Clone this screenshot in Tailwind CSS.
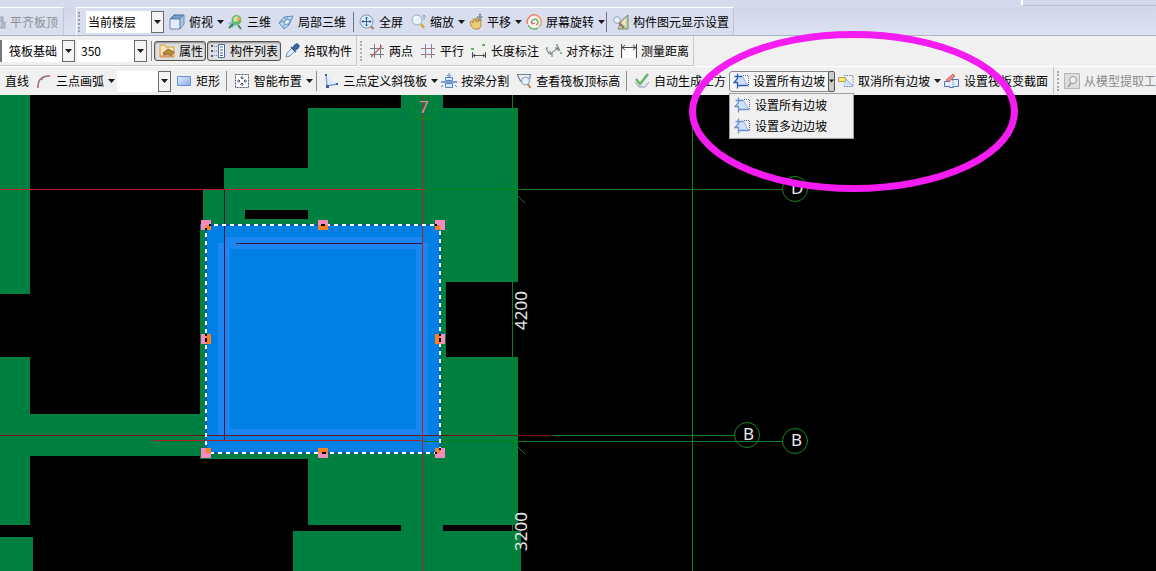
<!DOCTYPE html>
<html lang="zh-CN">
<head>
<meta charset="utf-8">
<title>筏板基础</title>
<script src="https://cdn.jsdelivr.net/npm/@tailwindcss/browser@4"></script>
</head>
<body class="relative flex h-screen flex-col overflow-hidden bg-black font-['Noto_Sans_CJK_SC',sans-serif] text-xs leading-4 text-black">

<svg class="hidden" aria-hidden="true">
  <symbol id="down" viewBox="0 0 7 4"><path d="M0 0h7L3.5 4z" fill="#1c1c1c"/></symbol>
  <symbol id="slope" viewBox="0 0 16 16">
    <path d="M4.500 3.500h5l5 9h-10v-2L1 9.500l3.500-3z" fill="#cfe0fa"/>
    <path d="M4.500 .5v5L1 9.500h3.500v6M1.500 3.500h8M4.500 12.500h11" fill="none" stroke="currentColor" stroke-width="1.300"/>
    <path d="M9.500 3.500l5 9" fill="none" stroke="#8fb0e6"/>
    <path d="M10 2.500h5.500v10" fill="none" stroke="#5a6478" stroke-dasharray="1 1"/>
  </symbol>
  <symbol id="globe" viewBox="0 0 16 16">
    <path d="M1 9l5-2 3 4-4 3z" fill="#8fb8e8"/>
    <circle cx="9.500" cy="6" r="5" fill="#63b56a"/><path d="M6 4l4-2 3 2-2 3-4 1z" fill="#c9e8a0"/><circle cx="12" cy="5" r="2" fill="#e8a060"/>
    <path d="M6 10l-4 4M11 11l3 4" stroke="#3f8b46" stroke-width="2"/>
  </symbol>
</svg>

<header class="shrink-0 bg-[#f0f0f0]">
  <!-- view toolbar -->
  <div class="flex h-[7px] justify-end bg-[#d5dbed]"><div class="h-1.5 w-[135px] border-b border-l-2 border-b-[#b9c0d3] border-l-white"></div></div>
  <div class="flex h-[29px] border-b border-[#a9b4c8] bg-linear-to-b from-[#d0d7ea] to-[#dde2f2] whitespace-nowrap">
    <div class="flex w-[64px] shrink-0 items-center border-t border-r border-t-white border-r-[#c3c8d8] bg-[#dadfee] text-[#8d8f97]">
      <button class="flex items-center gap-1" disabled>
        <svg class="h-4 w-1.5" viewBox="10 0 6 16"><path d="M10 3h3v4h-3M11 8h4v6h-5" fill="#b6bac6" stroke="#9ca1b0"/></svg>平齐板顶</button>
    </div>
    <div class="ml-3 flex items-center border-t border-r border-l border-t-white border-r-[#bcc3d6] border-l-white bg-[#d9deef]">
      <span class="mr-1.5 ml-px h-5 border-l-2 border-dotted border-[#9aa1b5]"></span>
      <div class="mr-px flex h-[22px] w-[78px] bg-white">
        <select aria-label="楼层" class="min-w-0 flex-1 appearance-none pl-0.5 outline-none"><option>当前楼层</option></select>
        <button aria-label="展开楼层" class="flex w-[13px] items-center justify-center border border-[#6b6b6b] bg-[#f4f4f4]"><svg class="h-1 w-[7px]"><use href="#down"/></svg></button>
      </div>
      <button class="flex items-center gap-1 pl-1">
        <svg class="size-4" viewBox="0 0 16 16"><path d="M1 5l4-4h10l-4 4z" fill="#6fa0cf" stroke="#47678c"/><path d="M1 5h10v10H1z" fill="#e2eefb" stroke="#6d8cb0"/><path d="M11 5l4-4v9l-4 5z" fill="#a9c8e8" stroke="#6d8cb0"/></svg>俯视
        <svg class="h-1 w-[7px]"><use href="#down"/></svg></button>
      <button class="flex items-center gap-1 pr-[3px] pl-[3px]"><svg class="size-4"><use href="#globe"/></svg>三维</button>
      <button class="flex items-center gap-1 pr-[3px] pl-1">
        <svg class="size-4" viewBox="0 0 16 16"><path d="M1 9l5-6 9-1-4 9-5 4z" fill="#bcd9f5" stroke="#5f8fc0"/><path d="M3 6l8 5M6 3l5 8M10 2L5 14M1 9l12-4" fill="none" stroke="#5f8fc0" stroke-width=".8"/><path d="M6 8l4-3 2 3-4 3z" fill="#eef6fd" stroke="#5f8fc0" stroke-width=".8"/></svg>局部三维</button>
      <span class="mr-px ml-1 h-5 w-px bg-[#6f7686]"></span>
      <button class="flex items-center gap-1 pr-[3px] pl-1">
        <svg class="size-4" viewBox="0 0 16 16"><path d="M11.500 12l3 3" stroke="#a87a3c" stroke-width="2"/><circle cx="7.500" cy="7.500" r="6.500" fill="#e1effc" stroke="#8198b5"/><path d="M7.500 3v9M3 7.500h9M6 4.500L7.500 3 9 4.500M6 10.500L7.500 12 9 10.500M4.500 6L3 7.500 4.500 9M10.500 6L12 7.500 10.500 9" fill="none" stroke="#2f5ea5"/></svg>全屏</button>
      <button class="flex items-center gap-1 pl-1">
        <svg class="size-4" viewBox="0 0 16 16"><path d="M11 10l3 4" stroke="#d8a640" stroke-width="2.500"/><circle cx="7" cy="6" r="5" fill="#e6f1fc" stroke="#98acc6"/><path d="M4 5a3 3 0 0 1 4-2" fill="none" stroke="#fff" stroke-width="1.500"/><path d="M14 1v5M12.500 2.500L14 1l1.500 1.500" fill="none" stroke="#8398b4"/></svg>缩放
        <svg class="h-1 w-[7px]"><use href="#down"/></svg></button>
      <button class="flex items-center gap-1 pl-1">
        <svg class="h-4 w-3.5" viewBox="0 0 14 16"><path d="M1 8l2-1 1 2 0-4h2l1 3V4h2v4l1-3h2v7l-2 3H5l-3-3z" fill="#edcb75" stroke="#a67e35" stroke-width=".8"/><path d="M11 0v7M8 3h6M10 1l1-1 1 1" stroke="#687587" fill="none"/></svg>平移
        <svg class="h-1 w-[7px]"><use href="#down"/></svg></button>
      <button class="flex items-center gap-1 pl-1">
        <svg class="size-4" viewBox="0 0 16 16"><circle cx="8" cy="8" r="7" fill="#fbeef0"/><path d="M1.500 10A7 7 0 0 1 11 1.500" fill="none" stroke="#e88078" stroke-width="1.500"/><path d="M11 1.500A7 7 0 0 1 13 13" fill="none" stroke="#e5a35d" stroke-width="1.500"/><path d="M12 14A7 7 0 0 1 2 11M6 9a3 3 0 1 1 4 2" fill="none" stroke="#65b868" stroke-width="1.500"/><path d="M5 7l1 3 3-1" fill="none" stroke="#d05a58"/></svg>屏幕旋转
        <svg class="h-1 w-[7px]"><use href="#down"/></svg></button>
      <span class="mr-0.5 ml-px h-5 w-px bg-[#6f7686]"></span>
      <button class="flex items-center gap-1 pr-1 pl-1">
        <svg class="size-4" viewBox="0 0 16 16"><path d="M9 6l6-5v14H5z" fill="#bdd3a5" stroke="#7b846d"/><path d="M8 9l5-5v8z" fill="#f3e3b8"/><circle cx="4" cy="6" r="3.300" fill="#eaf3fc" stroke="#92a2b8"/><path d="M6 9l5 5" stroke="#8c7b64" stroke-width="2"/></svg>构件图元显示设置</button>
    </div>
  </div>

  <!-- component toolbar -->
  <div class="flex h-[30px] items-stretch whitespace-nowrap">
    <div class="flex items-center border-r border-b border-[#c9c9c9]">
      <div class="flex h-[22px] w-[75px] border-l-2 border-[#777] bg-white">
        <select aria-label="构件类型" class="min-w-0 flex-1 appearance-none pl-[7px] outline-none"><option>筏板基础</option></select>
        <button aria-label="展开构件类型" class="flex w-[13px] items-center justify-center border border-[#6b6b6b] bg-[#f4f4f4]"><svg class="h-1 w-[7px]"><use href="#down"/></svg></button>
      </div>
      <div class="ml-0.5 flex h-[22px] w-[70px] bg-white">
        <input aria-label="构件" value="350" class="min-w-0 flex-1 pl-1 outline-none">
        <button aria-label="展开构件" class="flex w-[13px] items-center justify-center border border-[#6b6b6b] bg-[#f4f4f4]"><svg class="h-1 w-[7px]"><use href="#down"/></svg></button>
      </div>
      <span class="mr-0.5 ml-1 h-5 w-px bg-[#8c8c8c]"></span>
      <button aria-pressed="true" class="flex h-5 items-center gap-1 rounded-[3px] border border-[#555] bg-[#e0e0e0] pr-0.5 pl-1 shadow-[inset_0_1px_2px_#888]">
        <svg class="size-4" viewBox="0 0 16 16"><path d="M1 2h5l1 2h8v10H1z" fill="#fbe5b0" stroke="#d29a45"/><path d="M4 10l5-4 6 3-3 4-3-2-4 1z" fill="#b88a32" stroke="#6f5520" stroke-width=".7"/><path d="M1 13h13" stroke="#d56a50"/></svg>属性</button>
      <button aria-pressed="true" class="ml-px flex h-5 items-center gap-1 rounded-[3px] border border-[#555] bg-[#e0e0e0] px-0.5 shadow-[inset_0_1px_2px_#888]">
        <svg class="size-4" viewBox="0 0 16 16"><path d="M8.500 1.500h6v13h-6z" fill="#fff" stroke="#3f68ad"/><path d="M10 4h3M10 7h3M10 10h3M10 12.500h3" stroke="#3f68ad"/><path d="M1 3h2M1 8h2M1 13h2" stroke="#44597d" stroke-width="2"/><path d="M4 3.500h4M4 8h4M4 12.500h4" stroke="#7485a0" stroke-dasharray="1 1"/></svg>构件列表</button>
      <button class="flex items-center gap-1 pr-1 pl-[3px]">
        <svg class="size-4" viewBox="0 0 16 16"><path d="M2 14l1-4 5-5 3 3-5 5z" fill="#d9ebfc" stroke="#6d92bd"/><path d="M7 4l5 5M9 5l2-3 2-1 2 2-1 2-3 2z" fill="#3e6ca8" stroke="#315a92" stroke-width="1.500"/></svg>拾取构件</button>
    </div>
    <div class="ml-[3px] flex items-center border-r border-b border-[#c9c9c9]">
      <span class="mr-[3px] h-5 border-l-2 border-dotted border-[#b0b0b0]"></span>
      <button class="flex items-center gap-1 pr-[3px] pl-1">
        <svg class="size-4" viewBox="0 0 16 16"><path d="M5.500 1v14M11.500 1v14M1 5.500h14M1 11.500h14" stroke="#7d7589"/><path d="M2 14L13 3" stroke="#b56b65" stroke-width="1.200"/></svg>两点</button>
      <button class="flex items-center gap-1 pr-[3px] pl-1">
        <svg class="size-4" viewBox="0 0 16 16"><path d="M5.500 1v14M11.500 1v14" stroke="#7487b5"/><path d="M1 5.500h14M1 11.500h14" stroke="#a67b7b"/></svg>平行</button>
      <button class="flex items-center gap-1 pr-[3px] pl-1">
        <svg class="size-4" viewBox="0 0 16 16"><path d="M1.500 9v6M14.500 9v6M1 12.500h14M4 11l-2 1.500L4 14M12 11l2 1.500-2 1.500" fill="none" stroke="#555"/><path d="M0 6h3M11 2h3" stroke="#69ad69" stroke-width="2"/></svg>长度标注</button>
      <button class="flex items-center gap-1 pr-[3px] pl-1">
        <svg class="size-4" viewBox="0 0 16 16"><path d="M0 5l3 6M4 11l8-6M11 2l3 6M4 8v3h3M9 5h3v3" fill="none" stroke="#66706a"/><path d="M0 5h2M5 13h2M14 10h2M10 2h2" stroke="#69ad69" stroke-width="1.500"/></svg>对齐标注</button>
      <button class="flex items-center gap-1 pr-1 pl-1">
        <svg class="size-4" viewBox="0 0 16 16"><path d="M2 5h12v10H2z" fill="#fff"/><path d="M.5 1v14M15.500 1v14M1 4.500h14M4 2L1 4.500 4 7M12 2l3 2.500L12 7" fill="none" stroke="#444"/></svg>测量距离</button>
    </div>
  </div>

  <!-- drawing toolbar -->
  <div class="flex h-[29px] items-center border-t border-white whitespace-nowrap">
    <button class="pr-1 pl-[5px]">直线</button>
    <button class="flex items-center gap-1 pl-[3px]">
      <svg class="size-4" viewBox="0 0 16 16"><path d="M2 14C2 7 6 3 13 3" fill="none" stroke="#8a7078" stroke-width="1.300"/><path d="M1 12h2v3H1zM5 5h2v2H5zM11 2h3v2h-3z" fill="#c77e74"/></svg>三点画弧
      <svg class="h-1 w-[7px]"><use href="#down"/></svg></button>
    <div class="ml-0.5 flex h-[21px] w-[54px] bg-white">
      <input aria-label="半径" class="min-w-0 flex-1 outline-none">
      <button aria-label="展开半径" class="flex w-[13px] items-center justify-center border border-[#6b6b6b] bg-[#f4f4f4]"><svg class="h-1 w-[7px]"><use href="#down"/></svg></button>
    </div>
    <button class="flex items-center gap-1 pr-[3px] pl-[5px]">
      <svg class="size-4" viewBox="0 0 16 16"><defs><linearGradient id="rg" x2="1" y2="1"><stop stop-color="#e4eeff"/><stop offset="1" stop-color="#87aaf0"/></linearGradient></defs><path d="M1.500 3.500h13v9h-13z" fill="url(#rg)" stroke="#6b8fd6"/></svg>矩形</button>
    <span class="mr-[3px] ml-[3px] h-5 w-px bg-[#8c8c8c]"></span>
    <button class="flex items-center gap-1 pl-1">
      <svg class="size-4" viewBox="0 0 16 16"><path d="M1.500 1.500h13v13h-13z" fill="#fff" stroke="#4b5669" stroke-dasharray="2 1"/><path d="M8 3v3M8 10v3M3 8h3M10 8h3M6.500 4.500L8 6l1.500-1.500M6.500 11.500L8 10l1.500 1.500M4.500 6.500L6 8 4.500 9.500M11.500 6.500L10 8l1.500 1.500" fill="none" stroke="#40516e"/></svg>智能布置
      <svg class="h-1 w-[7px]"><use href="#down"/></svg></button>
    <span class="mr-[5px] ml-[3px] h-5 w-px bg-[#8c8c8c]"></span>
    <button class="flex items-center gap-1 pl-0.5">
      <svg class="size-4" viewBox="0 0 16 16"><path d="M4 3l10 9-10 2z" fill="#dfeafa"/><path d="M3 2l1 11 10-2" fill="none" stroke="#7d9fd0" stroke-width="1.300"/><path d="M2 1h2v2H2zM3 12h3v3H3zM13 10h2v2h-2z" fill="#3a5e9b"/></svg>三点定义斜筏板
      <svg class="h-1 w-[7px]"><use href="#down"/></svg></button>
    <button class="flex items-center gap-1 pr-[3px] pl-[3px]">
      <svg class="size-4" viewBox="0 0 16 16"><path d="M4.500 4.500h7v3h-7zM4.500 10.500h7v4h-7z" fill="#d7e7fb" stroke="#5a86c8"/><path d="M0 9h16" stroke="#5a86c8" stroke-width="1.500"/><path d="M8 0v3M2 12l-2 2M14 12l2 2M6 2l2 1.500L10 2" fill="none" stroke="#5a86c8"/></svg>按梁分割</button>
    <button class="flex items-center gap-1 pr-[3px] pl-1">
      <svg class="size-4" viewBox="0 0 16 16"><path d="M1 1.500h14M1.500 2l3 6 4-1M14 2v4" fill="none" stroke="#7181a4" stroke-width="1.200"/><circle cx="9.500" cy="8" r="4" fill="#e4f0fc" stroke="#7f95b8"/><path d="M11.500 11l3 4" stroke="#b88a50" stroke-width="2"/></svg>查看筏板顶标高</button>
    <span class="mr-[3px] ml-[3px] h-5 w-px bg-[#8c8c8c]"></span>
    <button class="flex items-center gap-1 pr-[3px] pl-1">
      <svg class="size-4" viewBox="0 0 16 16"><path d="M1 9l4 5h6l4-5" fill="#e4ebf3" stroke="#8b9ab0"/><path d="M2 6l4 5 8-10" fill="none" stroke="#68b56b" stroke-width="2.500"/></svg>自动生成土方</button>
    <div class="relative flex h-[21px]">
      <button class="flex items-center gap-1 rounded-l-[3px] border border-[#888] bg-[#f5f5f5] px-[3px]"><svg class="size-4 text-[#2f5db5]"><use href="#slope"/></svg>设置所有边坡</button>
      <button aria-label="更多边坡选项" aria-expanded="true" class="-ml-px flex w-[7px] items-center justify-center rounded-[2px] border border-[#555] bg-[#ccc]"><svg class="h-1 w-[5px]"><use href="#down"/></svg></button>
      <div role="menu" class="absolute top-full left-0 z-10 mt-px flex w-[125px] flex-col border border-[#a0a0a0] bg-[#f0f0f0] py-px">
        <button role="menuitem" class="flex h-[21px] items-center gap-[5px] pl-1"><svg class="size-4 text-[#6d8fce]"><use href="#slope"/></svg>设置所有边坡</button>
        <button role="menuitem" class="flex h-[21px] items-center gap-[5px] pl-1"><svg class="size-4 text-[#6d8fce]"><use href="#slope"/></svg>设置多边边坡</button>
      </div>
    </div>
    <button class="flex items-center gap-1 pl-[3px]">
      <svg class="size-4" viewBox="0 0 16 16"><path d="M5 3l10 10H5z" fill="#cfe0fa"/><path d="M6 2.500h9v11H5" fill="none" stroke="#7186b0" stroke-dasharray="1.500 1"/><path d="M7 5l8 8" stroke="#8ea8d8"/><path d="M.5 4.500h7v4h-7z" fill="#f6e77e" stroke="#b9a148"/></svg>取消所有边坡
      <svg class="h-1 w-[7px]"><use href="#down"/></svg></button>
    <button class="flex items-center gap-1 pr-[5px] pl-[3px]">
      <svg class="size-4" viewBox="0 0 16 16"><path d="M.5 13.500v-5h5v-2h9v7h-5v1h-4v-1z" fill="#e4edfb" stroke="#5276bd"/><path d="M9 7v7" stroke="#5276bd" stroke-dasharray="1 1"/><path d="M2 7l7-6 2 2-6 6z" fill="#e88c84" stroke="#b95c56" stroke-width=".8"/></svg>设置筏板变截面</button>
    <div class="flex h-full items-center border-l border-[#c4c4c4] text-[#8c8c8c]">
      <span class="mr-px ml-[3px] h-5 border-l-2 border-dotted border-[#a8a8a8]"></span>
      <button class="flex items-center gap-1 pl-1" disabled>
        <svg class="size-4" viewBox="0 0 16 16"><path d="M.5.5h15v15H.5z" fill="#dedede" stroke="#b5b5b5"/><circle cx="9" cy="7" r="3.500" fill="#eee" stroke="#999"/><path d="M7 10l-3 4" stroke="#999" stroke-width="1.500"/></svg>从模型提取工</button>
    </div>
  </div>
</header>

<main class="min-h-0 flex-1 overflow-hidden">
  <svg class="block h-full w-full font-['Noto_Sans',sans-serif] text-[17px]" role="img" aria-label="筏板平面图">
    <g transform="translate(0 -95)">
      <!-- slab -->
      <path fill="#008040" d="M0 95h30v199H0zM0 357h30v57h170V224h3v-34h21v-22h84v-60h93V95h42v13h75v174h-72v75h72v168h-75v6h78v40H293v-40h108v-6h-93v-66H200v-3H30v69H0zM0 537h33v34H0z"/>
      <path d="M245 210h63v9h-63z"/>
      <!-- selected slab -->
      <path fill="#0080e4" d="M206 225h234v228H206z"/>
      <path fill="#1a86f2" d="M225 237h197v6h6v192H218V243h7z"/>
      <path fill="#0080e4" d="M230 249h186v180H230z"/>
      <!-- axes -->
      <path fill="#0c8018" d="M423 189h359v1H423zM553 435h182v1H553zM423 441h359v1H423zM692 95h1v476h-1zM512 95h1v476h-1z"/>
      <path fill="#701414" d="M0 435h553v1H0z"/>
      <path fill="#3c1038" d="M224 190h1v251h-1zM236 243h186v1H236z"/>
      <path fill="#b81c28" d="M0 189h423v1H0zM422 95h1v476h-1zM153 440h270v1H153z"/>
      <g fill="none">
        <path d="M500 178l25 25M504 433l21 21" stroke="#0c7a20"/>
        <g stroke="#128a1c">
          <circle cx="424" cy="107" r="12.500"/><circle cx="747" cy="435" r="12.500"/><circle cx="795" cy="441" r="12.500"/><circle cx="795" cy="189" r="12.500"/>
        </g>
        <path d="M206 225h234v228H206z" stroke="#0b5c9c" stroke-width="2"/>
        <path d="M206 225h234v228H206z" stroke="#fff" stroke-width="2" stroke-dasharray="4"/>
      </g>
      <!-- grips -->
      <path fill="#f888c0" d="M201 220h10v10h-10zM318 220h10v10h-10zM435 220h10v10h-10zM201 334h10v10h-10zM435 334h10v10h-10zM201 448h10v10h-10zM318 448h10v10h-10zM435 448h10v10h-10z"/>
      <path fill="#f88020" d="M206 225h5v5h-5zM318 225h10v5h-10zM435 225h5v5h-5zM206 334h5v10h-5zM435 334h5v10h-5zM206 448h5v5h-5zM318 448h10v5h-10zM435 448h5v5h-5z"/>
      <path d="M321 224h4v2h-4zM205 334h2v2h-2zM205 338h2v4h-2zM439 334h2v2h-2zM439 338h2v4h-2zM322 452h4v2h-4zM209 224h2v2h-2zM205 228h2v2h-2zM435 224h2v2h-2zM439 448h2v2h-2zM435 452h2v2h-2z"/>
    </g>
    <g transform="translate(0 -95)" fill="#e8e8e8">
      <text x="419" y="113" fill="#d98c94">7</text>
      <text x="791" y="194">D</text>
      <text x="743" y="440">B</text>
      <text x="791" y="446">B</text>
      <text transform="translate(527 330) rotate(-90)">4200</text>
      <text transform="translate(527 551) rotate(-90)">3200</text>
    </g>
  </svg>
</main>

<svg class="pointer-events-none absolute inset-0 z-20 h-full w-full" aria-hidden="true"><ellipse cx="853.500" cy="111.500" rx="161" ry="77" fill="none" stroke="#f41cf0" stroke-width="7"/></svg>
</body>
</html>
